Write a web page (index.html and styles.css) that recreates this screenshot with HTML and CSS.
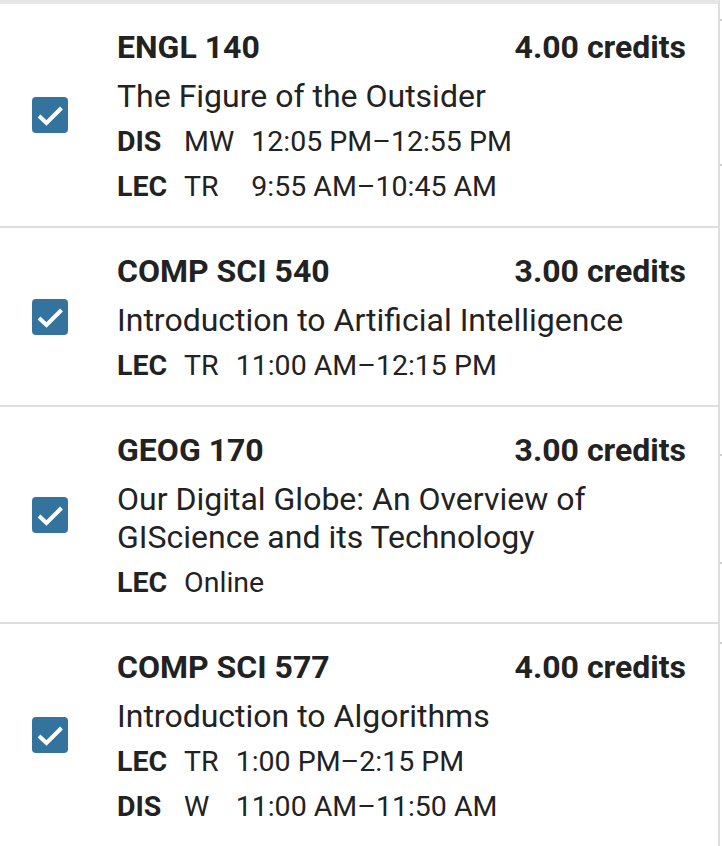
FILE: index.html
```html
<!DOCTYPE html>
<html lang="en">
<head>
<meta charset="utf-8">
<title>Cart</title>
<link rel="stylesheet" href="styles.css">
</head>
<body>
<div class="layout">
  <ul class="course-list">
    <li class="course">
      <span class="check"><svg viewBox="0 0 36 36" width="36" height="36"><path d="M7 19 L14.5 26 L29.5 11"/></svg></span>
      <div class="info">
        <div class="head"><span class="code">ENGL 140</span><span class="credits">4.00 credits</span></div>
        <div class="name">The Figure of the Outsider</div>
        <div class="sched">
          <span class="type">DIS</span><span>MW</span><span>12:05 PM–12:55 PM</span>
          <span class="type">LEC</span><span>TR</span><span>9:55 AM–10:45 AM</span>
        </div>
      </div>
    </li>
    <li class="course">
      <span class="check"><svg viewBox="0 0 36 36" width="36" height="36"><path d="M7 19 L14.5 26 L29.5 11"/></svg></span>
      <div class="info">
        <div class="head"><span class="code">COMP SCI 540</span><span class="credits">3.00 credits</span></div>
        <div class="name">Introduction to Artificial Intelligence</div>
        <div class="sched">
          <span class="type">LEC</span><span>TR</span><span>11:00 AM–12:15 PM</span>
        </div>
      </div>
    </li>
    <li class="course">
      <span class="check"><svg viewBox="0 0 36 36" width="36" height="36"><path d="M7 19 L14.5 26 L29.5 11"/></svg></span>
      <div class="info">
        <div class="head"><span class="code">GEOG 170</span><span class="credits">3.00 credits</span></div>
        <div class="name">Our Digital Globe: An Overview of GIScience and its Technology</div>
        <div class="sched">
          <span class="type">LEC</span><span>Online</span><span></span>
        </div>
      </div>
    </li>
    <li class="course">
      <span class="check"><svg viewBox="0 0 36 36" width="36" height="36"><path d="M7 19 L14.5 26 L29.5 11"/></svg></span>
      <div class="info">
        <div class="head"><span class="code">COMP SCI 577</span><span class="credits">4.00 credits</span></div>
        <div class="name">Introduction to Algorithms</div>
        <div class="sched">
          <span class="type">LEC</span><span>TR</span><span>1:00 PM–2:15 PM</span>
          <span class="type">DIS</span><span>W</span><span>11:00 AM–11:50 AM</span>
        </div>
      </div>
    </li>
  </ul>
  <div class="edge"></div>
</div>
</body>
</html>
```
FILE: styles.css
```css
* { box-sizing: border-box; }
html, body { margin: 0; padding: 0; background: #fff; }
body {
  font-family: Roboto, "Liberation Sans", sans-serif;
  color: #222;
  width: 722px;
  height: 846px;
  overflow: hidden;
}
.layout {
  display: flex;
  height: 846px;
}
.course-list {
  list-style: none;
  margin: 0;
  padding: 0;
  width: 720px;
  border-top: 4px solid #e6e6e6;
  border-right: 2px solid #dedede;
  height: 846px;
}
.edge {
  width: 2px;
  height: 846px;
  background:
    linear-gradient(#cfcfcf, #cfcfcf) 0 19px / 2px 2px no-repeat,
    linear-gradient(#cfcfcf, #cfcfcf) 0 164px / 2px 2px no-repeat,
    linear-gradient(#cfcfcf, #cfcfcf) 0 454px / 2px 2px no-repeat,
    linear-gradient(#cfcfcf, #cfcfcf) 0 562px / 2px 2px no-repeat,
    linear-gradient(#cfcfcf, #cfcfcf) 0 642px / 2px 2px no-repeat;
}
.course {
  display: flex;
  align-items: center;
  gap: 49px;
  padding: 0 32px;
  border-bottom: 2px solid #dedede;
}
.check {
  flex: none;
  width: 36px;
  height: 36px;
  border-radius: 4px;
  background: #33739e;
  display: block;
}
.check svg { display: block; }
.check path {
  fill: none;
  stroke: #fff;
  stroke-width: 4;
  stroke-linecap: butt;
  stroke-linejoin: miter;
}
.info {
  flex: 1;
  min-width: 0;
  padding: 24px 0 17px;
}
.head {
  display: flex;
  justify-content: space-between;
  align-items: baseline;
  font-size: 32px;
  font-weight: 700;
  line-height: 38px;
}
.name {
  margin-top: 11px;
  font-size: 32px;
  line-height: 38px;
}
.sched {
  margin-top: 4px;
  display: grid;
  grid-template-columns: auto auto 1fr;
  column-gap: 17px;
  font-size: 28.5px;
  line-height: 45px;
}
.type { font-weight: 700; }
```
